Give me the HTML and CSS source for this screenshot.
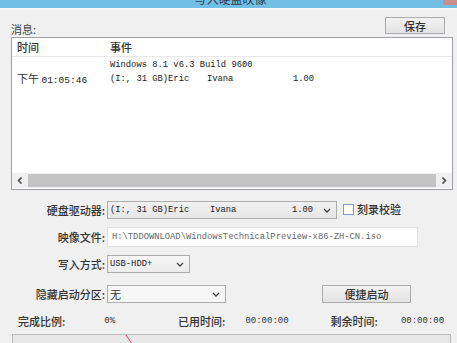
FILE: index.html
```html
<!DOCTYPE html>
<html>
  <head>
    <meta charset="utf-8">
    <link rel="stylesheet" href="styles.css">
  </head>
  <body>
    <div class="window">
      <div class="titlebar">
        <span class="title">写入硬盘映像</span>
        <span class="close"></span>
      </div>

      <div class="content">
        <div class="top-row">
          <span class="label-msg">消息:</span>
          <button class="btn btn-save">保存</button>
        </div>

        <div class="listbox">
          <div class="list-head">
            <span class="col-time">时间</span>
            <span class="col-event">事件</span>
          </div>
          <div class="list-body">
            <div class="list-row">
              <span class="col-time"></span>
              <span class="col-event mono">Windows 8.1 v6.3 Build 9600</span>
            </div>
            <div class="list-row">
              <span class="col-time"><span class="cjk">下午</span> <span class="mono">01:05:46</span></span>
              <span class="col-event mono"><span class="f1">(I:, 31 GB)Eric</span><span class="f2">Ivana</span><span>1.00</span></span>
            </div>
          </div>
          <div class="hscroll">
            <span class="arrow">
              <svg width="6" height="7" viewBox="0 0 6 7"><path d="M4.5 0.5 L1.5 3.5 L4.5 6.5" fill="none" stroke="#505050" stroke-width="1.6"/></svg>
            </span>
            <span class="thumb"></span>
            <span class="arrow">
              <svg width="6" height="7" viewBox="0 0 6 7"><path d="M1.5 0.5 L4.5 3.5 L1.5 6.5" fill="none" stroke="#505050" stroke-width="1.6"/></svg>
            </span>
          </div>
        </div>

        <div class="form">
          <div class="form-row row-drive">
            <span class="flabel">硬盘驱动器:</span>
            <div class="select select-drive">
              <span class="mono"><span class="d1">(I:, 31 GB)Eric</span><span class="d2">Ivana</span><span>1.00</span></span>
              <svg class="chev" width="8" height="5" viewBox="0 0 8 5"><path d="M1 1 L4 4 L7 1" fill="none" stroke="#444" stroke-width="1.3"/></svg>
            </div>
            <span class="checkbox"></span>
            <span class="check-label">刻录校验</span>
          </div>

          <div class="form-row row-image">
            <span class="flabel">映像文件:</span>
            <div class="input-path mono">H:\TDDOWNLOAD\WindowsTechnicalPreview-x86-ZH-CN.iso</div>
          </div>

          <div class="form-row row-mode">
            <span class="flabel">写入方式:</span>
            <div class="select select-mode">
              <span class="mono">USB-HDD+</span>
              <svg class="chev" width="8" height="5" viewBox="0 0 8 5"><path d="M1 1 L4 4 L7 1" fill="none" stroke="#444" stroke-width="1.3"/></svg>
            </div>
          </div>

          <div class="form-row row-hide">
            <span class="flabel">隐藏启动分区:</span>
            <div class="select select-hide">
              <span class="cjk">无</span>
              <svg class="chev" width="8" height="5" viewBox="0 0 8 5"><path d="M1 1 L4 4 L7 1" fill="none" stroke="#444" stroke-width="1.3"/></svg>
            </div>
            <button class="btn btn-boot">便捷启动</button>
          </div>

          <div class="stats">
            <span class="s-label s-done">完成比例:</span>
            <span class="s-val s-pct">0%</span>
            <span class="s-label s-used">已用时间:</span>
            <span class="s-val s-time1">00:00:00</span>
            <span class="s-label s-left">剩余时间:</span>
            <span class="s-val s-time2">00:00:00</span>
          </div>

          <div class="progress">
            <svg class="mark" width="8" height="9" viewBox="0 0 8 9"><path d="M1 0 L7 9" stroke="#e0405a" stroke-width="1"/></svg>
          </div>
        </div>
      </div>
    </div>
  </body>
</html>
```

FILE: styles.css
```css
html, body {
  margin: 0;
  padding: 0;
}
body {
  width: 457px;
  height: 343px;
  overflow: hidden;
  background-color: #f0f0f0;
  font-family: "Noto Sans CJK SC", "Liberation Sans", sans-serif;
  font-size: 11px;
  color: #333;
}
.window {
  position: relative;
  height: 343px;
}
.titlebar {
  position: relative;
  height: 8px;
  background-color: #72bfe5;
  border-bottom: 2px solid #f6f8fa;
  overflow: hidden;
  display: flex;
  justify-content: center;
}
.title {
  font-size: 12px;
  line-height: 12px;
  margin-top: -7px;
  margin-left: 4px;
  color: #2b3a48;
}
.close {
  position: absolute;
  right: 0;
  top: 0;
  width: 14px;
  height: 5px;
  background-color: #c98f90;
}
.content {
  padding-left: 11px;
}
.top-row {
  display: flex;
  justify-content: space-between;
  align-items: flex-end;
  margin-top: 7px;
  height: 17px;
  padding-right: 12px;
}
.label-msg {
  line-height: 12px;
  margin-bottom: -1px;
  color: #444;
}
.btn {
  font-family: "Noto Sans CJK SC", sans-serif;
  font-size: 11px;
  font-weight: 500;
  color: #333;
  background: linear-gradient(#f2f2f2, #e3e3e3);
  border: 1px solid #acacac;
  padding: 0;
  margin: 0;
}
.btn-save {
  width: 60px;
  height: 17px;
  line-height: 14px;
}
.listbox {
  margin-top: 3px;
  width: 440px;
  height: 151px;
  border: 1px solid #9c9fa5;
  background-color: #fff;
  display: flex;
  flex-direction: column;
}
.list-head {
  display: flex;
  height: 18px;
  line-height: 18px;
  border-bottom: 1px solid #e8e8e8;
  color: #333;
  font-weight: 500;
}
.col-time {
  width: 93px;
  padding-left: 5px;
  flex: none;
}
.col-event {
  padding-left: 0;
  white-space: pre;
}
.list-body {
  flex: 1;
  padding-top: 1px;
}
.list-row {
  display: flex;
  height: 14px;
  line-height: 14px;
  align-items: center;
}
.mono {
  font-family: "Liberation Mono", "DejaVu Sans Mono", monospace;
  font-size: 8.8px;
  color: #222;
}
.list-row .col-time .mono {
  font-size: 9.5px;
}
.cjk {
  font-family: "Noto Sans CJK SC", sans-serif;
  font-size: 11px;
}
.f1 {
  display: inline-block;
  width: 97px;
}
.f2 {
  display: inline-block;
  width: 86px;
}
.hscroll {
  display: flex;
  height: 15px;
  margin-bottom: 1px;
  align-items: center;
  background-color: #f0f0f0;
}
.arrow {
  width: 16px;
  height: 15px;
  display: flex;
  align-items: center;
  justify-content: center;
  flex: none;
}
.thumb {
  flex: 1;
  height: 13px;
  background-color: #c4c4c4;
}
.form {
  display: flex;
  flex-direction: column;
}
.form-row {
  display: flex;
  align-items: center;
  height: 20px;
}
.row-drive {
  margin-top: 10px;
}
.row-image {
  margin-top: 7px;
}
.row-mode {
  margin-top: 7px;
}
.row-hide {
  margin-top: 10px;
}
.flabel {
  width: 94px;
  text-align: right;
  flex: none;
  color: #333;
  font-weight: 500;
  padding-right: 2px;
}
.select {
  display: flex;
  align-items: center;
  justify-content: space-between;
  box-sizing: border-box;
  height: 18px;
  border: 1px solid #adadad;
  padding: 0 5px 0 2px;
  background: linear-gradient(#f1f1f1, #e6e6e6);
}
.select-drive {
  width: 230px;
}
.d1 {
  display: inline-block;
  width: 100px;
}
.d2 {
  display: inline-block;
  width: 82px;
}
.checkbox {
  width: 9px;
  height: 9px;
  border: 1px solid #7a9bd0;
  background-color: #fff;
  margin-left: 6px;
  margin-top: -2px;
}
.check-label {
  margin-left: 3px;
  margin-top: -3px;
  color: #333;
  font-weight: 500;
}
.input-path {
  box-sizing: border-box;
  width: 311px;
  height: 20px;
  line-height: 18px;
  border: 1px solid #e2e2e2;
  background-color: #fff;
  padding-left: 4px;
  color: #666;
  white-space: pre;
}
.select-mode {
  width: 83px;
  background: linear-gradient(#f6f6f6, #ececec);
}
.select-hide {
  width: 119px;
  background: #f7f7f7;
}
.btn-boot {
  width: 89px;
  height: 18px;
  line-height: 15px;
  margin-left: 96px;
}
.stats {
  display: flex;
  align-items: center;
  height: 20px;
  margin-top: 7px;
}
.s-label {
  color: #333;
  font-weight: 500;
  flex: none;
}
.s-val {
  font-family: "Liberation Mono", monospace;
  font-size: 9px;
  color: #333;
  flex: none;
}
.s-done {
  margin-left: 7px;
}
.s-pct {
  margin-left: 39px;
}
.s-used {
  margin-left: 63px;
}
.s-time1 {
  margin-left: 20px;
}
.s-left {
  margin-left: 42px;
}
.s-time2 {
  margin-left: 23px;
}
.progress {
  position: relative;
  margin-top: 3px;
  width: 437px;
  height: 12px;
  border: 1px solid #bcbcbc;
  background-color: #e6e6e6;
  margin-left: 1px;
}
.mark {
  position: absolute;
  left: 112px;
  top: 0;
}
```
